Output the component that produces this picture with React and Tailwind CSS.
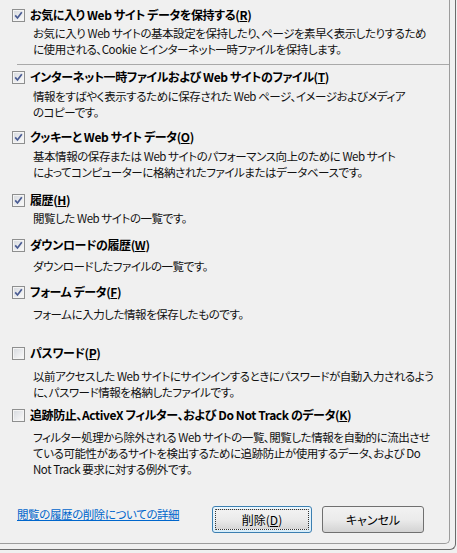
import React from "react";

const items = [
  {
    title: "お気に入り Web サイト データを保持する",
    key: "R",
    checked: true,
    mt: "mt-[7px]",
    dmt: "mt-[2px]",
    lines: [
      "お気に入り Web サイトの基本設定を保持したり、ページを素早く表示したりするため",
      "に使用される、Cookie とインターネット一時ファイルを保持します。",
    ],
    sep: true,
  },
  {
    title: "インターネット一時ファイルおよび Web サイトのファイル",
    key: "T",
    checked: true,
    mt: "mt-[4px]",
    dmt: "mt-[3px]",
    lines: [
      "情報をすばやく表示するために保存された Web ページ、イメージおよびメディア",
      "のコピーです。",
    ],
  },
  {
    title: "クッキーと Web サイト データ",
    key: "O",
    checked: true,
    mt: "mt-[9px]",
    dmt: "mt-[3px]",
    lines: [
      "基本情報の保存または Web サイトのパフォーマンス向上のために Web サイト",
      "によってコンピューターに格納されたファイルまたはデータベースです。",
    ],
  },
  {
    title: "履歴",
    key: "H",
    checked: true,
    mt: "mt-[12px]",
    dmt: "mt-[2px]",
    lines: ["閲覧した Web サイトの一覧です。"],
  },
  {
    title: "ダウンロードの履歴",
    key: "W",
    checked: true,
    mt: "mt-[11px]",
    dmt: "mt-[5px]",
    lines: ["ダウンロードしたファイルの一覧です。"],
  },
  {
    title: "フォーム データ",
    key: "F",
    checked: true,
    mt: "mt-[10px]",
    dmt: "mt-[6px]",
    lines: ["フォームに入力した情報を保存したものです。"],
  },
  {
    title: "パスワード",
    key: "P",
    checked: false,
    mt: "mt-[23px]",
    dmt: "mt-[7px]",
    lines: [
      "以前アクセスした Web サイトにサインインするときにパスワードが自動入力されるよう",
      "に、パスワード情報を格納したファイルです。",
    ],
  },
  {
    title: "追跡防止、ActiveX フィルター、および Do Not Track のデータ",
    key: "K",
    checked: false,
    mt: "mt-[7px]",
    dmt: "mt-[6px]",
    lines: [
      "フィルター処理から除外される Web サイトの一覧、閲覧した情報を自動的に流出させ",
      "ている可能性があるサイトを検出するために追跡防止が使用するデータ、および Do",
      "Not Track 要求に対する例外です。",
    ],
  },
];

function CheckBox({ checked }) {
  return (
    <span className="w-[13px] h-[13px] border border-[#8e8f8f] bg-white flex items-center justify-center shrink-0">
      <span className="w-[11px] h-[11px] border border-[#f4f4f4] bg-gradient-to-br from-[#d9dce1] to-[#f8f8f8] flex items-center justify-center">
        {checked && (
          <svg width="9" height="9" viewBox="0 0 9 9">
            <path
              d="M1.2 4.4 L3.5 7 L7.8 1.2"
              fill="none"
              stroke="#4a5c93"
              strokeWidth="1.7"
            />
          </svg>
        )}
      </span>
    </span>
  );
}

function Item({ item }) {
  return (
    <>
      <div className={`${item.mt} h-[16px] flex items-center`}>
        <div className="ml-[12px]">
          <CheckBox checked={item.checked} />
        </div>
        <span className="ml-[5px] font-bold text-[12px] leading-[16px] tracking-[-0.4px] text-black whitespace-nowrap">
          {item.title}(<span className="underline">{item.key}</span>)
        </span>
      </div>
      <div className={`${item.dmt} pl-[33px] text-[11.5px] leading-[16px] tracking-[-0.45px] text-[#111]`}>
        {item.lines.map((line) => (
          <div key={line} className="whitespace-nowrap">
            {line}
          </div>
        ))}
      </div>
      {item.sep && (
        <div className="mt-[7px] ml-[17px] h-px bg-[#a9a9a9]" />
      )}
    </>
  );
}

function App() {
  return (
    <div className="w-[457px] h-[553px] bg-[#f0f0f0] overflow-hidden font-['Noto_Sans_CJK_JP','Noto_Sans',sans-serif] [font-feature-settings:'palt']">
      <div className="w-[456px] h-[550px] border-r border-b border-[#6b6b6b] rounded-br-[6px]">
        <div className="w-[450px] h-[544px] border-r border-b border-[#9c9c9c] rounded-br-[5px] flex flex-col">
          {items.map((item) => (
            <Item key={item.key} item={item} />
          ))}

          <div className="mt-[29px] flex items-start">
            <a
              href="#"
              className="ml-[17px] text-[11.5px] leading-[16px] tracking-[-0.4px] text-[#0066cc] underline whitespace-nowrap"
            >
              閲覧の履歴の削除についての詳細
            </a>

            <div className="ml-auto mr-[25px] flex gap-[10px]">
              <button className="w-[100px] h-[27px] rounded-[3px] border border-[#3c7fb1] bg-gradient-to-b from-[#eaf6fd] to-[#d9eefa] p-[2px] text-[12px] text-black">
                <span className="w-full h-full flex items-center justify-center border border-dotted border-[#333] rounded-[1px] bg-gradient-to-b from-[#f2f2f2] via-[#ebebeb] to-[#d6d6d6]">
                  削除(<span className="underline">D</span>)
                </span>
              </button>

              <button className="w-[102px] h-[27px] rounded-[3px] border border-[#707070] bg-gradient-to-b from-[#f2f2f2] via-[#ebebeb] to-[#d3d3d3] flex items-center justify-center text-[12px] text-black">
                キャンセル
              </button>
            </div>
          </div>
        </div>
      </div>
    </div>
  );
}

export default App;
